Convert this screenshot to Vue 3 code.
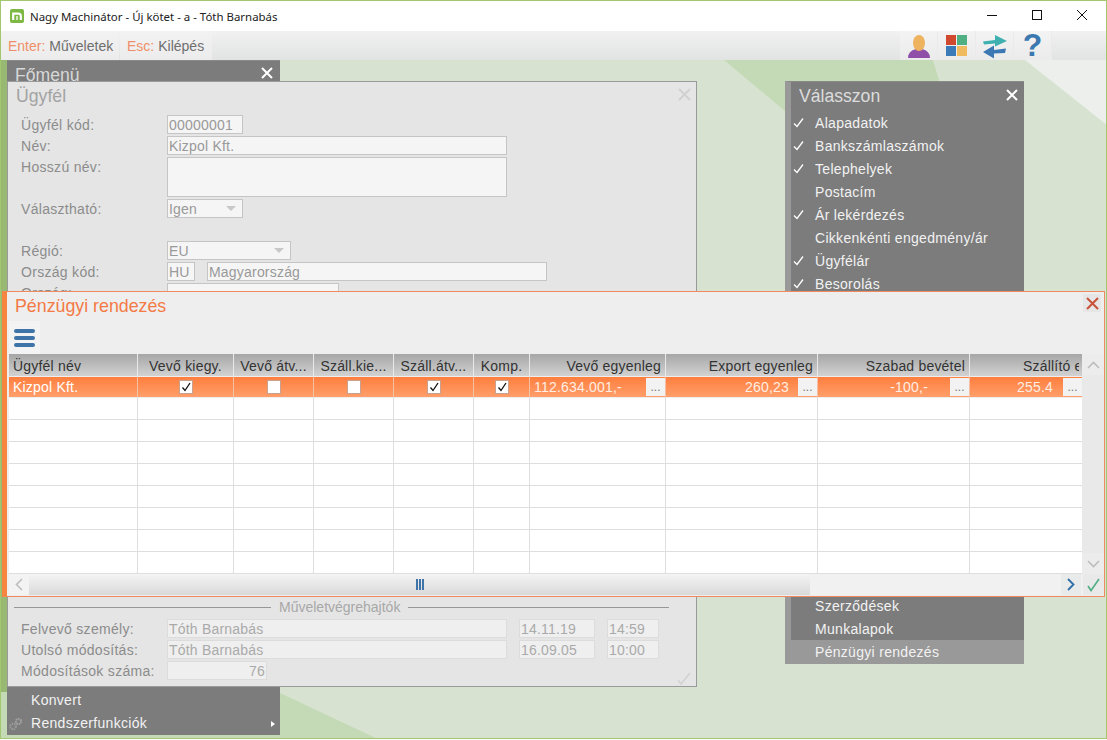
<script setup>
const topFields = [
  { label: 'Ügyfél kód:', inputs: [{ text: '00000001', cls: 'w76' }] },
  { label: 'Név:', inputs: [{ text: 'Kizpol Kft.', cls: 'w340' }] },
  { label: 'Hosszú név:', inputs: [{ text: '', cls: 'w340 tall' }] },
  { label: 'Választható:', inputs: [{ text: 'Igen', cls: 'w76', arrow: true }] },
  { label: 'Régió:', rowCls: 'spaced', inputs: [{ text: 'EU', cls: 'w124', arrow: true }] },
  { label: 'Ország kód:', inputs: [{ text: 'HU', cls: 'w28' }, { text: 'Magyarország', cls: 'w340 ml12' }] },
  { label: 'Ország:', inputs: [{ text: '', cls: 'w172' }] }
]
const bottomFields = [
  { label: 'Felvevő személy:', inputs: [{ text: 'Tóth Barnabás', cls: 'w340' }, { text: '14.11.19', cls: 'w76 ml12' }, { text: '14:59', cls: 'w52 ml12' }] },
  { label: 'Utolsó módosítás:', inputs: [{ text: 'Tóth Barnabás', cls: 'w340' }, { text: '16.09.05', cls: 'w76 ml12' }, { text: '10:00', cls: 'w52 ml12' }] },
  { label: 'Módosítások száma:', inputs: [{ text: '76', cls: 'w100 right' }] }
]
const choices = [
  { t: 'Alapadatok', c: true }, { t: 'Bankszámlaszámok', c: true }, { t: 'Telephelyek', c: true },
  { t: 'Postacím', c: false }, { t: 'Ár lekérdezés', c: true }, { t: 'Cikkenkénti engedmény/ár', c: false },
  { t: 'Ügyfélár', c: true }, { t: 'Besorolás', c: true }
]
const columns = [
  { t: 'Ügyfél név', cls: 'left' }, { t: 'Vevő kiegy.', cls: 'center' }, { t: 'Vevő átv...', cls: 'center' },
  { t: 'Száll.kie...', cls: 'center' }, { t: 'Száll.átv...', cls: 'center' }, { t: 'Komp.', cls: 'center' },
  { t: 'Vevő egyenleg', cls: 'right' }, { t: 'Export egyenleg', cls: 'right' }, { t: 'Szabad bevétel', cls: 'right' },
  { t: 'Szállító egyenleg', cls: 'clip' }
]
const selected = [
  { kind: 'text', v: 'Kizpol Kft.' },
  { kind: 'check', v: true }, { kind: 'check', v: false }, { kind: 'check', v: false },
  { kind: 'check', v: true }, { kind: 'check', v: true },
  { kind: 'money', v: '112.634.001,-', cls: 'mleft' },
  { kind: 'money', v: '260,23', cls: 'mr9' },
  { kind: 'money', v: '-100,-', cls: 'mr22' },
  { kind: 'money', v: '255.4', cls: 'mr10' }
]
const emptyRows = 8
</script>

<template>
  <div class="shell">
    <header class="titlebar">
      <svg class="logo" width="14" height="14" viewBox="0 0 14 14">
        <rect width="14" height="14" rx="2" fill="#7cb843" />
        <path d="M3.2 11V4.6h5.2q2.4 0 2.4 2.4V11" fill="none" stroke="#fff" stroke-width="2.2" />
        <rect x="6" y="7" width="2" height="4" fill="#d5e8bf" />
      </svg>
      <span class="wintitle">Nagy Machinátor - Új kötet - a - Tóth Barnabás</span>
      <div class="winbtns">
        <svg width="45" height="30" viewBox="0 0 45 30"><path d="M18 14.5h10" stroke="#111" stroke-width="1" /></svg>
        <svg width="45" height="30" viewBox="0 0 45 30"><rect x="18.5" y="9.5" width="9" height="9" fill="none" stroke="#111" stroke-width="1" /></svg>
        <svg width="45" height="30" viewBox="0 0 45 30"><path d="M18 9l10 10M28 9L18 19" stroke="#111" stroke-width="1" /></svg>
      </div>
    </header>

    <div class="toolbar">
      <div class="hint first"><span class="key">Enter:</span><span>Műveletek</span></div>
      <div class="hint second"><span class="key">Esc:</span><span>Kilépés</span></div>
      <div class="tools">
        <button class="tool">
          <svg width="26" height="26" viewBox="0 0 26 26">
            <path d="M2 25q0-7 8-9h6q8 2 8 9z" fill="#8f4fa8" />
            <ellipse cx="13" cy="10" rx="6" ry="8" fill="#eeb35e" />
          </svg>
        </button>
        <button class="tool">
          <svg width="22" height="22" viewBox="0 0 22 22">
            <rect x="0" y="0" width="10" height="10" fill="#d0492f" />
            <rect x="11" y="0" width="10" height="10" fill="#4fae82" />
            <rect x="0" y="11" width="10" height="10" fill="#3b7ab8" />
            <rect x="11" y="11" width="10" height="10" fill="#f0bb5e" />
          </svg>
        </button>
        <button class="tool">
          <svg width="26" height="26" viewBox="0 0 26 26">
            <path d="M1 8.5L13 7V2l12 6-12 5.500V10.500L2 11.500z" fill="#3fb0b0" />
            <path d="M1 19l11-6.500V17l12-1.500-1 4.500-11 .5v5z" fill="#3b78b4" />
          </svg>
        </button>
        <button class="tool"><span class="help">?</span></button>
      </div>
    </div>

    <main class="desktop">
      <svg class="wallpaper" width="1107" height="740" viewBox="0 0 1107 740">
        <rect x="0" y="0" width="1107" height="740" fill="#d7e3d0" />
        <polygon points="724,60 933,60 945,100 945,250 785,111" fill="#c4dab6" />
        <polygon points="1025,60 1107,60 1107,125" fill="#ecefeb" />
        <polygon points="0,600 280,693 380,740 0,740" fill="#c4dab6" />
        <rect x="0" y="60" width="7" height="632" fill="#98b974" />
      </svg>

      <section class="menu mainmenu">
        <div class="menu-title">Főmenü</div>
        <svg class="menu-x" width="12" height="12" viewBox="0 0 12 12"><path d="M1 1l10 10M11 1L1 11" stroke="#fff" stroke-width="2" /></svg>
        <div class="menu-foot">
          <div class="item">Konvert</div>
          <div class="item">
            <svg class="gears" width="14" height="14" viewBox="0 0 14 14">
              <circle cx="9.500" cy="4.500" r="2.600" fill="none" stroke="#a3a3a3" stroke-width="2" stroke-dasharray="1.500 .8" />
              <circle cx="4" cy="9.500" r="2.800" fill="none" stroke="#999" stroke-width="2.200" stroke-dasharray="1.500 .8" />
            </svg>
            Rendszerfunkciók
            <span class="submenu"></span>
          </div>
        </div>
      </section>

      <section class="menu choose">
        <div class="choose-title">Válasszon</div>
        <svg class="menu-x choose-x" width="12" height="12" viewBox="0 0 12 12"><path d="M1 1l10 10M11 1L1 11" stroke="#fff" stroke-width="2" /></svg>
        <div v-for="c in choices" :key="c.t" class="choice">
          <svg v-if="c.c" class="tick" width="11" height="10" viewBox="0 0 11 10"><path d="M1 5.500l3 3 6-8" fill="none" stroke="#fff" stroke-width="1.300" /></svg>
          {{ c.t }}
        </div>
        <div class="choose-foot">
          <div class="choice">Szerződések</div>
          <div class="choice">Munkalapok</div>
          <div class="choice active">Pénzügyi rendezés</div>
        </div>
      </section>

      <section class="customer">
        <h2 class="customer-title">Ügyfél</h2>
        <svg class="customer-x" width="13" height="13" viewBox="0 0 13 13"><path d="M1 1l11 11M12 1L1 12" stroke="#d0d0d0" stroke-width="1.800" /></svg>
        <div class="fields">
          <div v-for="f in topFields" :key="f.label" class="row" :class="f.rowCls">
            <label class="lab">{{ f.label }}</label>
            <div v-for="(i, n) in f.inputs" :key="n" class="inp" :class="i.cls">
              {{ i.text }}<span v-if="i.arrow" class="arrow"></span>
            </div>
          </div>
        </div>
        <div class="foot">
          <div class="legend"><i></i><span>Műveletvégrehajtók</span><i></i></div>
          <div v-for="f in bottomFields" :key="f.label" class="row low">
            <label class="lab">{{ f.label }}</label>
            <div v-for="(i, n) in f.inputs" :key="n" class="inp" :class="i.cls">{{ i.text }}</div>
          </div>
          <svg class="faint-check" width="14" height="14" viewBox="0 0 14 14"><path d="M1 8l3 4 9-11" fill="none" stroke="#d2d2d2" stroke-width="1.500" /></svg>
        </div>
      </section>

      <section class="finance">
        <h2 class="finance-title">Pénzügyi rendezés</h2>
        <button class="finance-x">
          <svg width="13" height="13" viewBox="0 0 13 13"><path d="M1 1l11 11M12 1L1 12" stroke="#c9533a" stroke-width="2" /></svg>
        </button>
        <button class="burger"><span></span><span></span><span></span></button>
        <div class="gridwrap">
          <div class="grid">
            <div class="hrow">
              <div v-for="c in columns" :key="c.t" class="hcell" :class="c.cls">{{ c.t }}</div>
            </div>
            <div class="brow sel">
              <div v-for="(c, i) in selected" :key="i" class="bcell">
                <span v-if="c.kind === 'text'" class="name">{{ c.v }}</span>
                <span v-else-if="c.kind === 'check'" class="box">
                  <svg v-if="c.v" width="12" height="12" viewBox="0 0 12 12"><path d="M2.500 6.500l2.500 3L10 2" fill="none" stroke="#111" stroke-width="1.300" /></svg>
                </span>
                <template v-else>
                  <span class="money" :class="c.cls">{{ c.v }}</span>
                  <span class="dots">...</span>
                </template>
              </div>
            </div>
            <div v-for="r in emptyRows" :key="r" class="brow">
              <div v-for="c in columns" :key="c.t" class="bcell"></div>
            </div>
          </div>
          <div class="vscroll">
            <div class="sbtn">
              <svg width="13" height="8" viewBox="0 0 13 8"><path d="M1 7l5.500-5.500L12 7" fill="none" stroke="#bdbdbd" stroke-width="1.600" /></svg>
            </div>
            <div class="sbtn">
              <svg width="13" height="8" viewBox="0 0 13 8"><path d="M1 1l5.500 5.500L12 1" fill="none" stroke="#bdbdbd" stroke-width="1.600" /></svg>
            </div>
          </div>
        </div>
        <div class="hbar">
          <div class="hscroll">
            <div class="hbtn light">
              <svg width="8" height="13" viewBox="0 0 8 13"><path d="M7 1L1.500 6.500 7 12" fill="none" stroke="#bdbdbd" stroke-width="1.600" /></svg>
            </div>
            <div class="thumb"><span></span><span></span><span></span></div>
            <div class="hbtn">
              <svg width="8" height="13" viewBox="0 0 8 13"><path d="M1 1l5.500 5.500L1 12" fill="none" stroke="#2f6ea8" stroke-width="1.800" /></svg>
            </div>
          </div>
          <div class="okbtn">
            <svg width="13" height="14" viewBox="0 0 13 14"><path d="M1 8l3 4.500L12 1" fill="none" stroke="#4fae82" stroke-width="1.600" /></svg>
          </div>
        </div>
      </section>
    </main>
  </div>
</template>

<style>
html, body { margin: 0; padding: 0; background: #fff; }
</style>

<style scoped>
* { box-sizing: border-box; }
.shell {
  width: 1107px; height: 739px; border: 1px solid #a3c76d;
  display: flex; flex-direction: column; overflow: hidden;
  font-family: "Liberation Sans", Arial, sans-serif; font-size: 14px; background: #fff;
}
.titlebar { height: 30px; flex: none; display: flex; align-items: center; padding-left: 9px; background: #fff; }
.logo { flex: none; }
.wintitle { margin-left: 6px; font-family: "Noto Sans", sans-serif; font-size: 11.45px; color: #222; white-space: nowrap; }
.winbtns { margin-left: auto; display: flex; margin-right: 2px; }
.winbtns svg { display: block; }

.toolbar { height: 29px; flex: none; display: flex; background: linear-gradient(#f1f1f1, #e2e3e3); }
.hint { display: flex; align-items: center; height: 29px; color: #6e6e6e; background: linear-gradient(#f2f2f2, #ececec); white-space: nowrap; }
.hint.first { width: 118px; padding-left: 7px; gap: 4px; }
.hint.second { width: 92px; margin-left: 1px; padding-left: 7px; gap: 4px; }
.key { color: #ef8f68; }
.tools { margin-left: auto; margin-right: 54px; display: flex; }
.tool { width: 38px; height: 29px; padding: 0; border: 0; margin: 0; display: flex; align-items: center; justify-content: center; background: linear-gradient(#f3f3f3, #ebebeb); border-right: 1px solid #eaeaea; }
.help { font: bold 32px/29px "Liberation Sans", sans-serif; color: #3a78b0; }

.desktop { position: relative; flex: 1; overflow: hidden; }
.wallpaper { position: absolute; left: -1px; top: -60px; }

.menu { position: absolute; color: #f2f2f2; background: #7c7c7c; }
.mainmenu { left: 6px; top: 0; width: 273px; height: 675px; display: flex; flex-direction: column; border-top: 1px solid #8a8a8a; }
.menu-title { padding: 3px 0 0 8px; font-size: 17.6px; line-height: 22px; color: #d8d8d8; }
.menu-x { position: absolute; top: 6px; right: 7px; }
.menu-foot { margin-top: auto; }
.item { position: relative; height: 23px; line-height: 23px; padding-left: 24px; letter-spacing: .3px; }
.gears { position: absolute; left: 2px; top: 5px; }
.submenu { position: absolute; right: 5px; top: 9px; border-left: 4px solid #fff; border-top: 3px solid transparent; border-bottom: 3px solid transparent; }

.choose { left: 784px; top: 21px; width: 239px; height: 583px; display: flex; flex-direction: column; border-left: 6px solid #999; border-top: 1px solid #8a8a8a; }
.choose-title { height: 29px; padding: 3px 0 0 8px; font-size: 17.6px; line-height: 22px; color: #dcdcdc; }
.choose-x { right: 6px; top: 7px; }
.choice { position: relative; height: 23px; line-height: 25px; padding-left: 24px; letter-spacing: .3px; white-space: nowrap; }
.tick { position: absolute; left: 2px; top: 7px; }
.choose-foot { margin-top: auto; }
.choice.active { margin-left: -6px; padding-left: 30px; background: #999; height: 24px; }

.customer { position: absolute; left: 6px; top: 21px; width: 690px; height: 606px; background: #e5e5e5; border: 1px solid #9a9a9a; padding: 3px 13px 0; display: flex; flex-direction: column; justify-content: space-between; color: #8c8c8c; }
.customer-title { margin: 0 0 8px -5px; font-size: 17.7px; line-height: 22px; font-weight: normal; color: #a3a3a3; }
.customer-x { position: absolute; right: 5px; top: 6px; }
.fields { flex: 1; }
.row { display: flex; margin-bottom: 2px; line-height: 19px; }
.row.spaced { margin-top: 23px; }
.lab { width: 146px; height: 19px; flex: none; padding-top: 1px; letter-spacing: .3px; }
.inp { position: relative; height: 19px; line-height: 19px; padding: 0 1px; border: 1px solid #c5c5c5; background: #f5f5f5; color: #999; white-space: nowrap; overflow: hidden; letter-spacing: .2px; }
.w28 { width: 28px; } .w52 { width: 52px; } .w76 { width: 76px; } .w100 { width: 100px; } .w124 { width: 124px; } .w172 { width: 172px; } .w340 { width: 340px; }
.ml12 { margin-left: 12px; }
.tall { height: 40px; }
.right { text-align: right; }
.arrow { position: absolute; right: 6px; top: 6px; border-top: 5px solid #c8c8c8; border-left: 5px solid transparent; border-right: 5px solid transparent; }
.foot { position: relative; padding-bottom: 4px; }
.low .inp { background: #efefef; border-color: #dcdcdc; color: #aaa; }
.legend { display: flex; align-items: center; height: 16px; margin: 0 14px 4px -7px; gap: 8px; color: #a8a8a8; }
.legend i { height: 1px; background: #979797; }
.legend i:first-child { width: 257px; }
.legend i:last-child { flex: 1; }
.faint-check { position: absolute; right: -8px; bottom: 0; }

.finance { position: absolute; left: 1px; top: 231px; width: 1103px; height: 306px; background: #eee; border: 1px solid #ef8a5f; border-left: 5px solid #f5853f; padding-left: 2px; }
.finance-title { margin: 0; height: 29px; padding: 3px 0 0 6px; line-height: 22px; font-size: 17.8px; font-weight: normal; color: #f47a45; }
.finance-x { position: absolute; right: 3px; top: 2px; width: 18px; height: 18px; padding: 0; border: 0; background: #e6e6e6; display: flex; align-items: center; justify-content: center; }
.burger { display: flex; flex-direction: column; justify-content: center; gap: 3px; width: 31px; height: 33px; padding: 0 5px; border: 0; margin: 0; background: #f3f3f3; }
.burger span { display: block; height: 4px; border-radius: 2px; background: #3f74a8; }
.gridwrap { display: flex; }
.grid { width: 1073px; }
.hrow, .brow { display: grid; grid-template-columns: 129px 96px 80px 80px 80px 56px 136px 152px 152px 112px; height: 22px; }
.hrow { background: linear-gradient(#a6a6a6, #d2d2d2); color: #333; }
.hcell { line-height: 24px; padding: 0 4px; border-right: 1px solid #e9e9e9; white-space: nowrap; overflow: hidden; letter-spacing: .2px; }
.hcell.center { text-align: center; padding: 0; }
.hcell.right { text-align: right; padding-right: 4px; }
.hcell.clip { border-right: 3px solid transparent; padding: 0 0 0 53px; }
.brow { background: #fff; }
.bcell { border-right: 1px solid #dedede; border-bottom: 1px solid #dedede; display: flex; align-items: center; justify-content: center; }
.bcell:last-child { border-right: 0; }
.brow.sel { background: linear-gradient(#ff7d3c, #ffa06d); color: #fff; }
.brow.sel .bcell { border-right-color: #f3c2a6; border-bottom-color: #eee; border-top: 1px solid #eee; justify-content: flex-end; }
.brow.sel .bcell:nth-child(-n+6) { justify-content: center; }
.name { width: 100%; padding-left: 4px; letter-spacing: .2px; }
.box { width: 14px; height: 14px; background: #fff; border: 1px solid #c8a28f; display: flex; align-items: center; justify-content: center; }
.money { flex: 1; text-align: right; color: #ffeee3; letter-spacing: .2px; }
.mleft { text-align: left; padding-left: 4px; }
.mr9 { padding-right: 9px; }
.mr22 { padding-right: 22px; }
.mr10 { padding-right: 10px; }
.dots { width: 19px; height: 18px; flex: none; background: #f2f2f2; color: #777; font-size: 12px; line-height: 18px; text-align: center; }
.vscroll { flex: 1; display: flex; flex-direction: column; justify-content: space-between; background: #e9e9e9; }
.sbtn { height: 21px; display: flex; align-items: center; justify-content: center; background: #ececec; }
.hbar { display: flex; height: 21px; }
.hscroll { width: 1073px; display: flex; background: #f1f1f1; }
.hbtn { width: 20px; flex: none; display: flex; align-items: center; justify-content: center; background: #e9eaea; }
.hbtn.light { background: #f3f3f3; }
.thumb { width: 781px; margin-right: 251px; display: flex; align-items: center; justify-content: center; gap: 1px; background: linear-gradient(#f4f4f4, #d9d9d9); }
.thumb span { width: 2px; height: 11px; background: #3f74a8; }
.okbtn { flex: 1; margin-left: 1px; display: flex; align-items: center; justify-content: center; background: #e9e9e9; }
</style>
